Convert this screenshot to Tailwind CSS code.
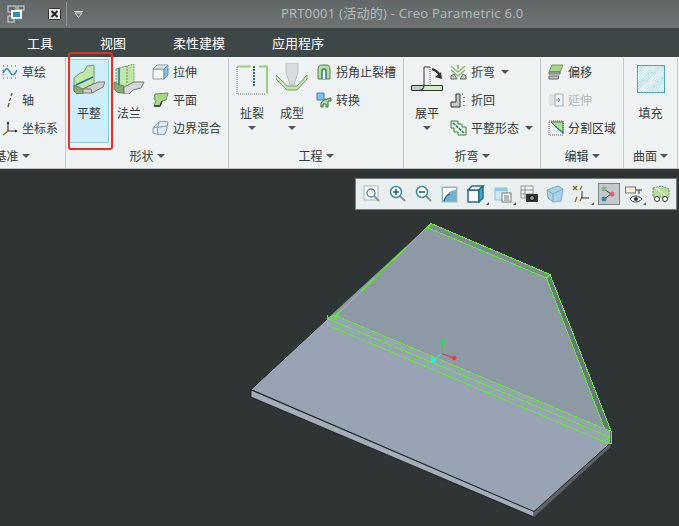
<!DOCTYPE html>
<html lang="zh-CN">
<head>
    <meta charset="UTF-8">
    <title>PRT0001 (活动的) - Creo Parametric 6.0</title>
    <script src="https://cdn.jsdelivr.net/npm/@tailwindcss/browser@4"></script>
</head>
<body class="bg-[#2f3535]">
<div class="relative w-[679px] h-[526px] overflow-hidden flex flex-col text-[12px] text-[#333a3a] font-['Noto_Sans_CJK_SC','Noto_Sans',sans-serif]">

    <!-- Title bar -->
    <div class="h-[28px] shrink-0 flex items-center bg-gradient-to-b from-[#626868] to-[#6d7373]">
        <svg class="ml-[7px] w-[18px] h-[18px]" viewBox="0 0 18 18">
            <rect x="1" y="1" width="8" height="6" fill="none" stroke="#d8dcdc"/>
            <rect x="1" y="11" width="6" height="6" fill="none" stroke="#d8dcdc"/>
            <rect x="11" y="1" width="6" height="4" fill="none" stroke="#d8dcdc"/>
            <rect x="4" y="5" width="11" height="9" fill="#fff"/>
            <rect x="6" y="7" width="7" height="5" fill="#2b8fc4"/>
        </svg>
        <svg class="ml-[23px] w-[14px] h-[14px]" viewBox="0 0 14 14">
            <rect x="0.5" y="1.5" width="12" height="11" rx="1" fill="#e8eaea" stroke="#333"/>
            <path d="M3.5 4l6 6M9.5 4l-6 6" stroke="#222" stroke-width="2"/>
        </svg>
        <div class="ml-[4px] w-px h-[24px] bg-[#8e9494]"></div>
        <svg class="ml-[7px] w-[9px] h-[7px]" viewBox="0 0 9 7">
            <path d="M0 0.5h9" stroke="#d8dcdc"/>
            <path d="M1 2h7L4.500 6.500z" fill="none" stroke="#d8dcdc"/>
        </svg>
        <span class="ml-[198px] text-[13px] tracking-[0.25px] text-[#b6bdbd] font-['Open_Sans','Noto_Sans_CJK_SC',sans-serif]">PRT0001 (活动的) - Creo Parametric 6.0</span>
    </div>

    <!-- Tabs -->
    <div class="h-[29px] shrink-0 flex items-center gap-[47px] pl-[27px] bg-[#3e4748] text-[13px] text-white">
        <span>工具</span>
        <span>视图</span>
        <span>柔性建模</span>
        <span>应用程序</span>
    </div>

    <!-- Ribbon -->
    <div class="h-[112px] shrink-0 flex bg-[#eef2f3] border-b border-[#b9bebf]">

        <!-- 基准 -->
        <div class="ml-[-41px] w-[107px] shrink-0 mt-px border-r border-[#c3c8c9] flex flex-col">
            <div class="h-[86px] pl-[43px] flex flex-col">
                <div class="h-[28px] flex items-center gap-[4px]">
                    <svg class="w-[16px] h-[16px]" viewBox="0 0 16 16">
                        <path d="M1 2h1M5 2h1M9 2h1M13 2h1M1 14h1M5 14h1M9 14h1M13 14h1M1 6v1M1 10v1" stroke="#555"/>
                        <path d="M1 9c3-6 5-5 7-1s4 4 7-2" fill="none" stroke="#2b8fc4" stroke-width="1.600"/>
                    </svg>
                    <span>草绘</span>
                </div>
                <div class="h-[28px] flex items-center gap-[4px]">
                    <svg class="w-[16px] h-[16px]" viewBox="0 0 16 16">
                        <path d="M10 1l-1 3M8.500 6l-1 3M7 11l-1 4" stroke="#5d5a3c" stroke-width="1.300"/>
                    </svg>
                    <span>轴</span>
                </div>
                <div class="h-[28px] flex items-center gap-[4px]">
                    <svg class="w-[16px] h-[16px]" viewBox="0 0 16 16">
                        <path d="M6 2v9h9" fill="none" stroke="#333" stroke-width="1.100"/>
                        <path d="M4.500 4l1.500-3 1.500 3zM13 9.500l3 1.500-3 1.500z" fill="#333"/>
                        <path d="M6 11l-5 4" stroke="#8a6a2c" stroke-width="1.500"/>
                    </svg>
                    <span>坐标系</span>
                </div>
            </div>
            <div class="flex-1 flex items-center justify-center gap-[3px]">
                <span>基准</span>
                <div class="w-0 h-0 border-x-[4px] border-t-[4px] border-x-transparent border-t-[#555]"></div>
            </div>
        </div>

        <!-- 形状 -->
        <div class="w-[163px] shrink-0 mt-px border-r border-[#c3c8c9] flex flex-col">
            <div class="h-[86px] pl-[3px] flex">
                <div class="mt-px w-[40px] h-[84px] bg-[#cfeefc] border border-[#8ccbe8] flex flex-col items-center">
                    <svg class="mt-[4px] w-[32px] h-[30px]" viewBox="0 0 32 30">
                        <path d="M1 14l6-5 4-1 3-6 7-1v18l-11 6-9 2z" fill="#c2e5a8" stroke="#7a9a6c"/>
                        <path d="M3 21l17-8" fill="none" stroke="#1f78a8" stroke-width="1.600"/>
                        <path d="M1 21l9 4v5H6c-3 0-5-2-5-5z" fill="#87a97a" stroke="#5f7c57"/>
                        <path d="M10 25l15-7h7l-2 5-11 6H10z" fill="#cdd0d0" stroke="#777"/>
                        <path d="M10 25h8l1 4" fill="none" stroke="#777"/>
                    </svg>
                    <span class="mt-[10px]">平整</span>
                </div>
                <div class="ml-px w-[38px] flex flex-col items-center">
                    <svg class="mt-[6px] w-[32px] h-[30px]" viewBox="0 0 32 30">
                        <path d="M3 5l18-5v18l-9 5H3z" fill="#c2e5a8" stroke="#7a9a6c" stroke-dasharray="2 1"/>
                        <path d="M6 4v18" stroke="#1f78a8" stroke-width="1.600"/>
                        <path d="M14 2v18" stroke="#5f8f6f" stroke-dasharray="2 1"/>
                        <path d="M1 18v4c0 5 3 7 8 7h2v-7l-4-1z" fill="#87a97a" stroke="#5f7c57"/>
                        <path d="M11 23l10-5h10l-3 6-8 2-4 4h-5z" fill="#d5d8d8" stroke="#777"/>
                    </svg>
                    <span class="mt-[10px]">法兰</span>
                </div>
                <div class="ml-[4px] flex flex-col">
                    <div class="h-[28px] flex items-center gap-[4px]">
                        <svg class="w-[17px] h-[16px]" viewBox="0 0 17 16">
                            <path d="M1 5h11v10H1z" fill="#f4f6f6" stroke="#999"/>
                            <path d="M1 5l4-4h11l-4 4z" fill="#cfe6f4" stroke="#999"/>
                            <path d="M12 5l4-4v10l-4 4z" fill="#7fbfe0" stroke="#5a97b8"/>
                        </svg>
                        <span>拉伸</span>
                    </div>
                    <div class="h-[28px] flex items-center gap-[4px]">
                        <svg class="w-[17px] h-[16px]" viewBox="0 0 17 16">
                            <path d="M3 2l13-1-2 7-4 1-2 5H2l2-6-2-1z" fill="#a8d788" stroke="#6b8f5c"/>
                            <path d="M2 14h6l2-5" fill="none" stroke="#333" stroke-width="1.400"/>
                        </svg>
                        <span>平面</span>
                    </div>
                    <div class="h-[28px] flex items-center gap-[4px]">
                        <svg class="w-[17px] h-[16px]" viewBox="0 0 17 16">
                            <path d="M1 8c3-3 4-5 6-6 3-1 7-1 9 0-1 4-1 8-3 12-3 1-7 1-12-1z" fill="#dcecf6" stroke="#8a9aa4"/>
                            <path d="M7 2c-1 4-2 8-1 12M1 8c4-1 9-1 14-2" fill="none" stroke="#8a9aa4"/>
                        </svg>
                        <span>边界混合</span>
                    </div>
                </div>
            </div>
            <div class="flex-1 flex items-center justify-center gap-[3px]">
                <span>形状</span>
                <div class="w-0 h-0 border-x-[4px] border-t-[4px] border-x-transparent border-t-[#555]"></div>
            </div>
        </div>

        <!-- 工程 -->
        <div class="w-[175px] shrink-0 mt-px border-r border-[#c3c8c9] flex flex-col">
            <div class="h-[86px] pl-[3px] flex">
                <div class="w-[40px] flex flex-col items-center">
                    <svg class="mt-[7px] w-[32px] h-[30px]" viewBox="0 0 32 30">
                        <path d="M1 1.500h14M23 1.500h8v27" fill="none" stroke="#9ccf7c" stroke-width="2"/>
                        <path d="M1 2v27h29" fill="none" stroke="#777" stroke-dasharray="1 1"/>
                        <path d="M18 1v20" stroke="#1f6f86" stroke-width="2" stroke-dasharray="2 1"/>
                    </svg>
                    <span class="mt-[9px]">扯裂</span>
                    <div class="mt-[4px] w-0 h-0 border-x-[4px] border-t-[4px] border-x-transparent border-t-[#555]"></div>
                </div>
                <div class="w-[40px] flex flex-col items-center">
                    <svg class="mt-[5px] w-[32px] h-[30px]" viewBox="0 0 32 30">
                        <path d="M10 0h12v9l-4 13h-4L10 9z" fill="#d8dcdd" stroke="#b9bebf"/>
                        <path d="M0 12l11 11h10l10-11v4L21 27H11L0 16z" fill="#c5e6ae" stroke="#7a9a6c"/>
                    </svg>
                    <span class="mt-[11px]">成型</span>
                    <div class="mt-[4px] w-0 h-0 border-x-[4px] border-t-[4px] border-x-transparent border-t-[#555]"></div>
                </div>
                <div class="ml-[4px] flex flex-col">
                    <div class="h-[28px] flex items-center gap-[4px]">
                        <svg class="w-[16px] h-[16px]" viewBox="0 0 16 16">
                            <path d="M2 15V5c0-3 2-4 4-4h4c3 0 4 2 4 4v10z" fill="#b5dd9a" stroke="#5f7c57"/>
                            <path d="M6 15V7a2 2 0 014 0v8" fill="#fff" stroke="#1f78a8" stroke-width="1.500"/>
                        </svg>
                        <span>拐角止裂槽</span>
                    </div>
                    <div class="h-[28px] flex items-center gap-[4px]">
                        <svg class="w-[16px] h-[16px]" viewBox="0 0 16 16">
                            <path d="M1 1h7v7H1z" fill="#7fc4e8" stroke="#3f86a8"/>
                            <path d="M8 8l7-2v3h-3v6h-2v-3H7v3H5v-4z" fill="#b5dd9a" stroke="#2f6f3f"/>
                        </svg>
                        <span>转换</span>
                    </div>
                    <div class="h-[28px]"></div>
                </div>
            </div>
            <div class="flex-1 flex items-center justify-center gap-[3px]">
                <span>工程</span>
                <div class="w-0 h-0 border-x-[4px] border-t-[4px] border-x-transparent border-t-[#555]"></div>
            </div>
        </div>

        <!-- 折弯 -->
        <div class="w-[137px] shrink-0 mt-px border-r border-[#c3c8c9] flex flex-col">
            <div class="h-[86px] pl-[3px] flex">
                <div class="w-[40px] flex flex-col items-center">
                    <svg class="mt-[8px] w-[32px] h-[27px]" viewBox="0 0 32 27">
                        <path d="M13 19V1h6" fill="none" stroke="#333"/>
                        <path d="M19 1v18" stroke="#3f7f3f" stroke-dasharray="1 1"/>
                        <path d="M0.500 19.500H13c0 3-2 5-5 5H0.500z" fill="#c3c8c8" stroke="#333"/>
                        <path d="M13 19.500h18.500v5H8c3 0 5-2 5-5z" fill="#d5efc4" stroke="#333"/>
                        <path d="M21 3c3 1 6 3 8 6" fill="none" stroke="#333" stroke-width="2"/>
                        <path d="M24 11l7 2-1-7z" fill="#333"/>
                    </svg>
                    <span class="mt-[11px]">展平</span>
                    <div class="mt-[4px] w-0 h-0 border-x-[4px] border-t-[4px] border-x-transparent border-t-[#555]"></div>
                </div>
                <div class="ml-[3px] flex flex-col">
                    <div class="h-[28px] flex items-center gap-[4px]">
                        <svg class="w-[17px] h-[16px]" viewBox="0 0 17 16">
                            <path d="M1 2l7 6 7-6M1 6l7 6 7-6" fill="none" stroke="#8bbf6e" stroke-width="1.500"/>
                            <path d="M1 15v-3l3-2 3 5zM16 15v-3l-3-2-3 5z" fill="#c5c9c9" stroke="#666"/>
                            <path d="M8 1v4" stroke="#666"/>
                        </svg>
                        <span>折弯</span>
                        <div class="ml-[2px] w-0 h-0 border-x-[4px] border-t-[4px] border-x-transparent border-t-[#555]"></div>
                    </div>
                    <div class="h-[28px] flex items-center gap-[4px]">
                        <svg class="w-[17px] h-[16px]" viewBox="0 0 17 16">
                            <path d="M1 15v-5h5V2h4v13z" fill="#c5c9c9" stroke="#333"/>
                            <path d="M12 2h1M14 5v1M14 9v1M14 13v1" stroke="#3f7f3f" stroke-width="1.500"/>
                        </svg>
                        <span>折回</span>
                    </div>
                    <div class="h-[28px] flex items-center gap-[4px]">
                        <svg class="w-[17px] h-[16px]" viewBox="0 0 17 16">
                            <path d="M1 1h7v3h4v3h4v8H8v-3H4V8H1z" fill="#e2f2d6" stroke="#3f7f3f"/>
                            <path d="M3 3l11 10" stroke="#1f78a8" stroke-width="1.600" stroke-dasharray="3 1"/>
                        </svg>
                        <span>平整形态</span>
                        <div class="ml-[2px] w-0 h-0 border-x-[4px] border-t-[4px] border-x-transparent border-t-[#555]"></div>
                    </div>
                </div>
            </div>
            <div class="flex-1 flex items-center justify-center gap-[3px]">
                <span>折弯</span>
                <div class="w-0 h-0 border-x-[4px] border-t-[4px] border-x-transparent border-t-[#555]"></div>
            </div>
        </div>

        <!-- 编辑 -->
        <div class="w-[83px] shrink-0 mt-px border-r border-[#c3c8c9] flex flex-col">
            <div class="h-[86px] pl-[7px] flex flex-col">
                <div class="h-[28px] flex items-center gap-[4px]">
                    <svg class="w-[16px] h-[16px]" viewBox="0 0 16 16">
                        <path d="M4 1h11l-3 7H1z" fill="#a8d788" stroke="#6f9a5c"/>
                        <path d="M1 8h11v2H1zM1 12h10l-1 3H1z" fill="#bfc4c4" stroke="#666"/>
                    </svg>
                    <span>偏移</span>
                </div>
                <div class="h-[28px] flex items-center gap-[4px] text-[#b4b9ba]">
                    <svg class="w-[16px] h-[16px]" viewBox="0 0 16 16">
                        <path d="M1 2h6v12H1z" fill="#dfe2e3"/>
                        <path d="M7 2h8v12H7z" fill="none" stroke="#a8adae"/>
                        <path d="M8 8h4M10 6l2 2-2 2" fill="none" stroke="#8d9293"/>
                    </svg>
                    <span>延伸</span>
                </div>
                <div class="h-[28px] flex items-center gap-[4px]">
                    <svg class="w-[16px] h-[16px]" viewBox="0 0 16 16">
                        <path d="M1 1h14v14H1z" fill="none" stroke="#555" stroke-dasharray="1 1"/>
                        <path d="M3 2h12v11L9 8z" fill="#b5dd9a" stroke="#3f7f3f"/>
                        <path d="M7 6l8 7" stroke="#1f78a8" stroke-width="1.500" stroke-dasharray="2 1"/>
                    </svg>
                    <span>分割区域</span>
                </div>
            </div>
            <div class="flex-1 flex items-center justify-center gap-[3px]">
                <span>编辑</span>
                <div class="w-0 h-0 border-x-[4px] border-t-[4px] border-x-transparent border-t-[#555]"></div>
            </div>
        </div>

        <!-- 曲面 -->
        <div class="w-[54px] shrink-0 mt-px border-r border-[#c3c8c9] flex flex-col">
            <div class="h-[86px] flex flex-col items-center">
                <div class="mt-[7px] w-[28px] h-[28px] border border-[#4f9fbf] bg-[repeating-linear-gradient(135deg,#bfe9f8_0,#bfe9f8_1px,#eefaff_1px,#eefaff_2px)]"></div>
                <span class="mt-[11px]">填充</span>
            </div>
            <div class="flex-1 flex items-center justify-center gap-[3px]">
                <span>曲面</span>
                <div class="w-0 h-0 border-x-[4px] border-t-[4px] border-x-transparent border-t-[#555]"></div>
            </div>
        </div>
    </div>

    <!-- Graphics area -->
    <div class="relative flex-1 bg-[#2f3535]">
        <svg class="block w-full h-full" viewBox="0 169 679 357">
            <!-- base plate sides -->
            <path d="M251 390L534 511.500V517L251 397z" fill="#a3aeb9" stroke="#111" stroke-width="0.700"/>
            <path d="M534 511.500L610.500 443V447L534 517z" fill="#5b6166"/>
            <!-- flange and strips -->
            <path d="M431 223.500L550 274.500L610.500 431.500L327 319z" fill="#8d99a5"/>
            <path d="M431 223.500L550 274.500L546.500 278L428.500 228z" fill="#7f8a94"/>
            <path d="M550 274.500L610.500 431.500L604.500 428.500L546.500 278z" fill="#6c767e"/>
            <!-- base plate top, bend area included -->
            <path d="M327.500 318L335 316L610.500 431.500V443L534 511.500L251 389.500z" fill="#98a4b3"/>
            <path d="M335 316L605 429.500L342 319z" fill="#8d99a5"/>
            <path d="M251 389.500L327 319" stroke="#111" fill="none"/>
            <path d="M251 389.500L534 511.500L610.500 443" stroke="#111" fill="none" stroke-width="0.800"/>
            <!-- edges -->
            <g fill="none" stroke="#5cf02a" stroke-width="1" shape-rendering="crispEdges">
                <path d="M334.500 317L431 223.500L550 274.500L611 431V443.500"/>
                <path d="M428.500 228L546.500 278L604.500 428.500"/>
                <path d="M546.500 278L550 274.500M428.500 228L431 223.500"/>
                <path d="M335 315.400L607 429.800"/>
                <path d="M327.500 318.600L609 436.800"/>
                <path d="M327 325L604 441.600L611 443.500"/>
                <path d="M327.500 318L335 315.400M327.500 315V325"/>
                <path d="M605 429L611 431M609 431V438L604 441.600"/>
            </g>
            <!-- axes -->
            <path d="M441.500 353.500L442.700 341" stroke="#35d04a" stroke-width="1.200"/>
            <path d="M441.500 353.500L454.300 358.300" stroke="#e83a3a" stroke-width="1.200"/>
            <path d="M441.500 353.500L433.500 360" stroke="#3cd8e8" stroke-width="1.200"/>
            <circle cx="442.700" cy="340.700" r="2.200" fill="#22e04a"/>
            <circle cx="454.300" cy="358.300" r="2.200" fill="#f03a3a"/>
            <circle cx="433.500" cy="360" r="2.500" fill="#22f0f0"/>
        </svg>

        <!-- View toolbar -->
        <div class="absolute left-[355px] top-[9px] w-[322px] h-[32px] pl-[3px] flex items-center bg-[#e9eeef] border border-[#777d7e]">
            <div class="w-[26px] flex justify-center">
                <svg class="w-[18px] h-[18px]" viewBox="0 0 18 18">
                    <rect x="1" y="1" width="14" height="14" fill="#f6f8f8" stroke="#b0b5b6"/>
                    <circle cx="8" cy="8" r="4" fill="#fff" stroke="#3f87a8" stroke-width="1.300"/>
                    <path d="M11 11l5 5" stroke="#8d9293" stroke-width="2"/>
                </svg>
            </div>
            <div class="w-[26px] flex justify-center">
                <svg class="w-[18px] h-[18px]" viewBox="0 0 18 18">
                    <circle cx="7" cy="7" r="5.500" fill="#fff" stroke="#3f87a8" stroke-width="1.500"/>
                    <path d="M4 7h6M7 4v6" stroke="#1f5f7f" stroke-width="1.600"/>
                    <path d="M11 11l5 5" stroke="#8d9293" stroke-width="2"/>
                </svg>
            </div>
            <div class="w-[26px] flex justify-center">
                <svg class="w-[18px] h-[18px]" viewBox="0 0 18 18">
                    <circle cx="7" cy="7" r="5.500" fill="#fff" stroke="#3f87a8" stroke-width="1.500"/>
                    <path d="M4 7h6" stroke="#1f5f7f" stroke-width="1.600"/>
                    <path d="M11 11l5 5" stroke="#8d9293" stroke-width="2"/>
                </svg>
            </div>
            <div class="w-[26px] flex justify-center">
                <svg class="w-[18px] h-[18px]" viewBox="0 0 18 18">
                    <rect x="1" y="2" width="15" height="15" fill="#6fb2d0" stroke="#b0b5b6"/>
                    <path d="M2 3h13v2c-5 0-8 3-9 5l-4 6z" fill="#fff"/>
                    <path d="M3 16c1-4 3-6 6-7" fill="none" stroke="#1f5f7f" stroke-width="1.300"/>
                </svg>
            </div>
            <div class="w-[26px] flex justify-center relative">
                <svg class="w-[18px] h-[18px]" viewBox="0 0 18 18">
                    <path d="M1 5h11v12H1z" fill="#fff" stroke="#1f6f8f" stroke-width="1.500"/>
                    <path d="M1 5l4-4h11l-4 4z" fill="#fff" stroke="#1f6f8f" stroke-width="1.500"/>
                    <path d="M12 5l4-4v12l-4 4z" fill="#4f9fbf" stroke="#1f6f8f" stroke-width="1.500"/>
                </svg>
                <div class="absolute right-0 bottom-[-2px] w-0 h-0 border-l-[3px] border-t-[3px] border-l-transparent border-t-transparent border-b-[3px] border-b-[#555]"></div>
            </div>
            <div class="w-[27px] flex justify-center relative">
                <svg class="w-[18px] h-[18px]" viewBox="0 0 18 18">
                    <path d="M1 3h12v12H1z" fill="#cfe6f4" stroke="#8cbcd8"/>
                    <path d="M1 3h12v3H1z" fill="#8cc8e8"/>
                    <rect x="8" y="8" width="9" height="9" fill="#f6f8f8" stroke="#777"/>
                    <path d="M10 11h5M10 13h5M10 15h5" stroke="#777"/>
                </svg>
                <div class="absolute right-0 bottom-[-2px] w-0 h-0 border-l-[3px] border-t-[3px] border-l-transparent border-t-transparent border-b-[3px] border-b-[#555]"></div>
            </div>
            <div class="w-[26px] flex justify-center">
                <svg class="w-[18px] h-[18px]" viewBox="0 0 18 18">
                    <path d="M1 1h12v12H1z" fill="#f2f4f4" stroke="#8d9293"/>
                    <path d="M1 5h12M1 9h12M5 1v12" stroke="#8d9293"/>
                    <rect x="6" y="9" width="12" height="8" rx="1" fill="#333"/>
                    <circle cx="12" cy="13" r="2.500" fill="#999" stroke="#111"/>
                </svg>
            </div>
            <div class="w-[26px] flex justify-center">
                <svg class="w-[18px] h-[18px]" viewBox="0 0 18 18">
                    <path d="M1 5l11-4 5 3-2 12-8 1-5-4z" fill="#a9d4e8" stroke="#7fa9bc"/>
                    <path d="M1 5l6 4 10-5M7 9l0 8" fill="none" stroke="#7fa9bc"/>
                </svg>
            </div>
            <div class="w-[26px] flex justify-center relative">
                <svg class="w-[18px] h-[18px]" viewBox="0 0 18 18">
                    <path d="M1 1l4 4M5 1L1 5" stroke="#7a6a2c" stroke-width="1.300"/>
                    <path d="M10 1l-2 4M5 12l-2 5M8 16l2-4" stroke="#8a6a2c" stroke-width="1.300"/>
                    <path d="M10 6v7h7" fill="none" stroke="#333"/>
                </svg>
                <div class="absolute right-0 bottom-[-2px] w-0 h-0 border-l-[3px] border-t-[3px] border-l-transparent border-t-transparent border-b-[3px] border-b-[#555]"></div>
            </div>
            <div class="w-[22px] h-[22px] ml-[4px] flex items-center justify-center bg-[#c4c8c9] border border-[#7d8283]">
                <svg class="w-[18px] h-[18px]" viewBox="0 0 18 18">
                    <path d="M4 4l7 5-7 5" fill="none" stroke="#444"/>
                    <circle cx="4" cy="4" r="2.500" fill="#7fb584"/>
                    <circle cx="12" cy="9" r="2.500" fill="#d5696f"/>
                    <circle cx="4" cy="14" r="2.500" fill="#3f87a8"/>
                </svg>
            </div>
            <div class="w-[28px] flex justify-center relative">
                <svg class="w-[18px] h-[18px]" viewBox="0 0 18 18">
                    <rect x="0.500" y="2" width="10" height="6" fill="#f8f0d0" stroke="#777"/>
                    <path d="M11 5h6M14 5v4" stroke="#333"/>
                    <path d="M5 14c3-4 8-4 12 0-4 4-9 4-12 0z" fill="#fff" stroke="#333"/>
                    <circle cx="11" cy="14" r="2" fill="#333"/>
                </svg>
                <div class="absolute right-[2px] bottom-[-2px] w-0 h-0 border-l-[3px] border-t-[3px] border-l-transparent border-t-transparent border-b-[3px] border-b-[#555]"></div>
            </div>
            <div class="w-[26px] flex justify-center">
                <svg class="w-[18px] h-[18px]" viewBox="0 0 18 18">
                    <path d="M1 3l8-2 8 3v8H1z" fill="#b5dd9a" stroke="#5f8f5f" stroke-dasharray="2 1"/>
                    <path d="M4 3l9 7" stroke="#fff" stroke-width="1.500" stroke-dasharray="2 1"/>
                    <circle cx="5" cy="14" r="2.500" fill="#fff" stroke="#333"/>
                    <circle cx="13" cy="14" r="2.500" fill="#fff" stroke="#333"/>
                </svg>
            </div>
        </div>
    </div>

    <!-- Red callout around 平整 -->
    <div class="absolute left-[68px] top-[52px] w-[45px] h-[98px] border-2 border-[#e5302a] rounded-[3px]"></div>
</div>
</body>
</html>
